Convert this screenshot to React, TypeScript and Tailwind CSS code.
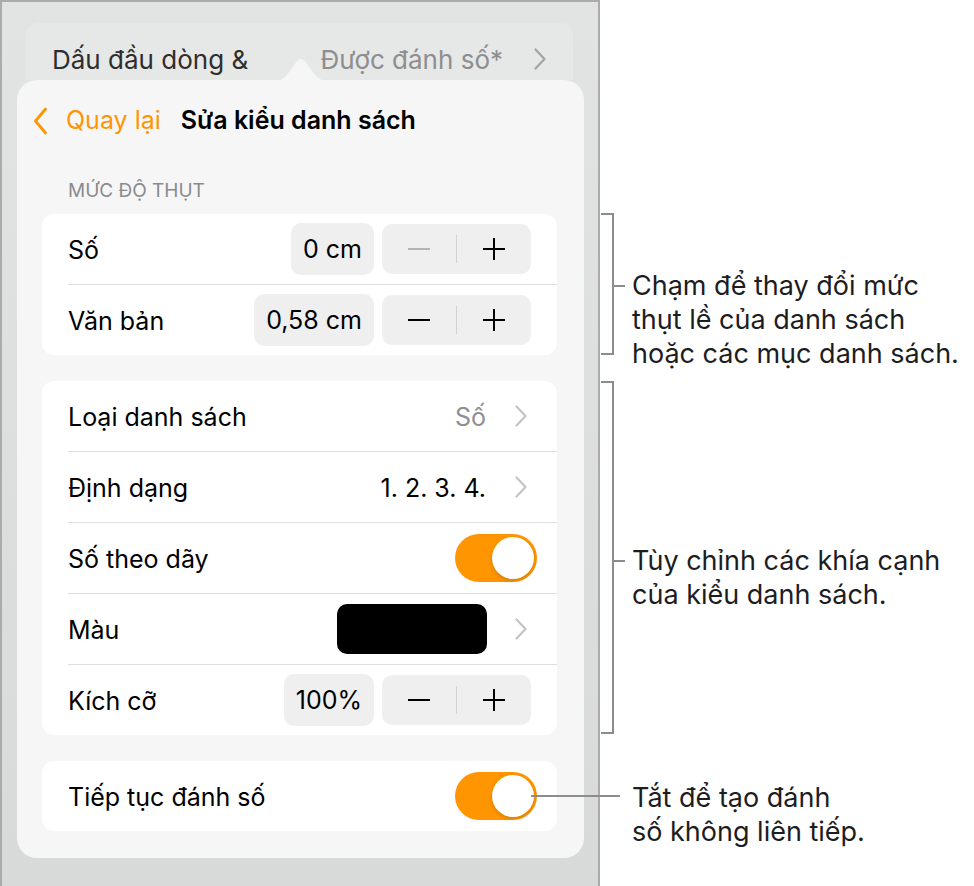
import React from "react";

const font = { fontFamily: "Inter, 'Noto Sans', sans-serif" };

function Chevron({ color = "#c4c4c7" }: { color?: string }) {
  return (
    <svg width="14" height="24" viewBox="0 0 14 24" fill="none">
      <path d="M2.5 2.5 L11.5 12 L2.5 21.5" stroke={color} strokeWidth="2.2" strokeLinecap="round" strokeLinejoin="round" />
    </svg>
  );
}

function Toggle() {
  return (
    <div className="flex justify-end items-center w-[82px] h-[48px] rounded-full bg-[#ff9500] p-[3px] -mr-[6px]">
      <div className="w-[42px] h-[42px] rounded-full bg-white shadow-[0_2px_4px_rgba(0,0,0,0.15)]" />
    </div>
  );
}

function Stepper({ dimMinus = false }: { dimMinus?: boolean }) {
  return (
    <div className="flex items-center w-[149px] h-[50px] rounded-[10px] bg-[#efeff0] ml-[8px]">
      <div className="flex-1 flex justify-center">
        <div className={`w-[22px] h-[2px] ${dimMinus ? "bg-[#b4b4b6]" : "bg-black"}`} />
      </div>
      <div className="w-px h-[28px] bg-[#d2d2d4]" />
      <div className="flex-1 flex justify-center">
        <div className="relative w-[22px] h-[22px]">
          <div className="absolute left-0 top-[10px] w-[22px] h-[2px] bg-black" />
          <div className="absolute top-0 left-[10px] w-[2px] h-[22px] bg-black" />
        </div>
      </div>
    </div>
  );
}

function Pill({ children }: { children: React.ReactNode }) {
  return (
    <div className="h-[52px] px-[12px] pt-[2px] flex items-center rounded-[10px] bg-[#efeff0] text-[25px] text-black">
      {children}
    </div>
  );
}

function Divider() {
  return <div className="ml-[26px] h-px bg-[#dedede]" />;
}

function Row({ label, children }: { label: string; children?: React.ReactNode }) {
  return (
    <div className="flex items-center h-[70px] pl-[26px] pr-[26px]">
      <span className="flex-1 text-[25px] text-black pt-[3px]">{label}</span>
      {children}
    </div>
  );
}

function Callout({ lines }: { lines: string[] }) {
  return (
    <div className="flex items-start">
      <div className="w-[11px] h-[2px] bg-[#8c8c8c] mt-[16px]" />
      <p className="ml-[7px] text-[27px] leading-[34px] text-[#1d1d1f]">
        {lines.map((l) => (
          <span key={l} className="block whitespace-nowrap">{l}</span>
        ))}
      </p>
    </div>
  );
}

export default function App() {
  return (
    <div className="flex w-[974px] h-[886px] bg-white" style={font}>
      <div className="w-[600px] h-[886px] shrink-0 border-l-2 border-t-2 border-r-2 border-[#ababab] bg-gradient-to-b from-[#e2e3e3] to-[#d8d9d9] flex flex-col items-start">
        <div className="ml-[24px] mt-[21px] w-[547px] h-[57px] rounded-t-[12px] bg-[#e6e7e7] flex items-center pl-[26px] pr-[26px] pt-[15px]">
          <span className="text-[26px] text-[#2e2e2e]">Dấu đầu dòng &amp;</span>
          <span className="ml-auto text-[26px] text-[#8e8e8e]">Được đánh số*</span>
          <span className="ml-[30px]"><Chevron color="#a3a3a3" /></span>
        </div>
        <div className="relative ml-[15px] w-[567px] rounded-[20px] bg-[#f6f6f6] pl-[25px] pr-[27px] pb-[27px]">
          <svg className="absolute -top-[22px] left-[258px]" width="52" height="23" viewBox="0 0 52 23">
            <path d="M0 23 C 14 23, 19 1, 26 1 C 33 1, 38 23, 52 23 Z" fill="#f6f6f6" />
          </svg>
          <div className="flex items-center h-[80px] -ml-[9px] pt-[1px]">
            <svg width="15" height="28" viewBox="0 0 15 28" fill="none">
              <path d="M12.5 2 L2.5 14 L12.5 26" stroke="#ff9500" strokeWidth="2.8" strokeLinecap="round" strokeLinejoin="round" />
            </svg>
            <span className="ml-[18px] text-[25px] text-[#ff9500]">Quay lại</span>
            <span className="ml-[20px] text-[25px] font-semibold text-black">Sửa kiểu danh sách</span>
          </div>
          <div className="mt-[21px] pl-[26px] h-[20px] flex items-center text-[19px] text-[#8a8a8e]">
            MỨC ĐỘ THỤT
          </div>
          <div className="mt-[13px] rounded-[12px] bg-white">
            <Row label="Số">
              <Pill>0 cm</Pill>
              <Stepper dimMinus />
            </Row>
            <Divider />
            <Row label="Văn bản">
              <Pill>0,58 cm</Pill>
              <Stepper />
            </Row>
          </div>
          <div className="mt-[26px] rounded-[12px] bg-white">
            <Row label="Loại danh sách">
              <span className="text-[25px] text-[#8e8e93] pt-[3px]">Số</span>
              <span className="ml-[28px] mr-[3px]"><Chevron /></span>
            </Row>
            <Divider />
            <Row label="Định dạng">
              <span className="text-[25px] text-black pt-[3px]">1. 2. 3. 4.</span>
              <span className="ml-[28px] mr-[3px]"><Chevron /></span>
            </Row>
            <Divider />
            <Row label="Số theo dãy">
              <Toggle />
            </Row>
            <Divider />
            <Row label="Màu">
              <div className="w-[150px] h-[50px] rounded-[10px] bg-black" />
              <span className="ml-[27px] mr-[3px]"><Chevron /></span>
            </Row>
            <Divider />
            <Row label="Kích cỡ">
              <Pill>100%</Pill>
              <Stepper />
            </Row>
          </div>
          <div className="mt-[26px] rounded-[12px] bg-white">
            <Row label="Tiếp tục đánh số">
              <div className="relative">
                <Toggle />
                <div className="absolute left-[76px] top-[23px] w-[89px] h-[2px] bg-[#8c8c8c]" />
              </div>
            </Row>
          </div>
        </div>
      </div>

      <div className="flex flex-col pt-[213px] pl-[1px]">
        <div className="flex h-[168px]">
          <div className="w-[13px] h-[142px] border-y-2 border-r-2 border-[#8c8c8c]" />
          <div className="mt-[56px]">
            <Callout lines={["Chạm để thay đổi mức", "thụt lề của danh sách", "hoặc các mục danh sách."]} />
          </div>
        </div>
        <div className="flex h-[355px]">
          <div className="w-[13px] h-[353px] border-y-2 border-r-2 border-[#8c8c8c]" />
          <div className="mt-[163px]">
            <Callout lines={["Tùy chỉnh các khía cạnh", "của kiểu danh sách."]} />
          </div>
        </div>
        <div className="mt-[45px] pl-[31px]">
          <p className="text-[27px] leading-[34px] text-[#1d1d1f]">
            <span className="block whitespace-nowrap">Tắt để tạo đánh</span>
            <span className="block whitespace-nowrap">số không liên tiếp.</span>
          </p>
        </div>
      </div>
    </div>
  );
}
